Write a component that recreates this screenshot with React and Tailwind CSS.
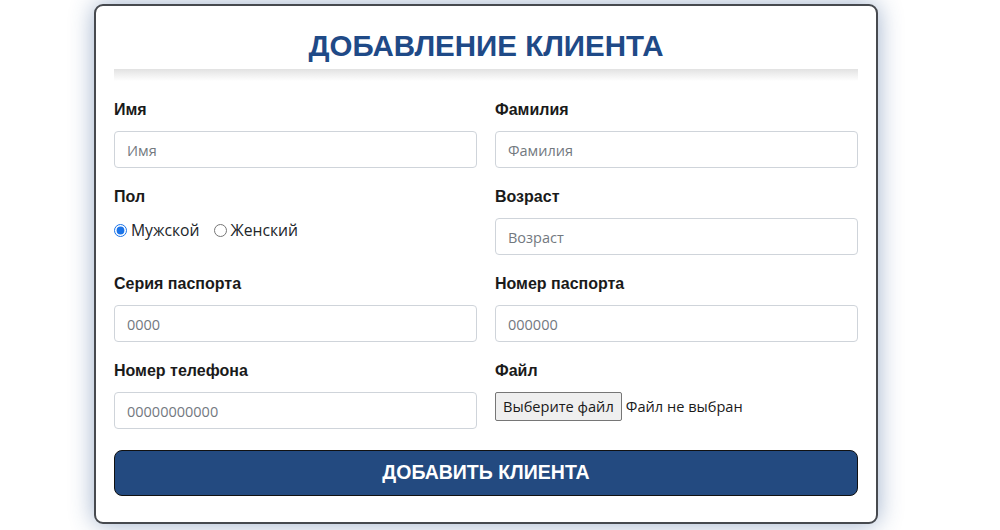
import React from "react";

const labelCls = "block h-[19px] leading-[19px] text-[16px] font-bold text-[#1a1a1a] mb-[12px] [font-family:'Liberation_Sans',Arial,sans-serif]";
const inputCls = "block w-full h-[37px] rounded-[4px] border border-[#cfd4da] bg-white px-[12px] pt-[1px] text-[14.5px] text-[#212529] placeholder:text-[#73797f] outline-none [font-family:'Open_Sans','Noto_Sans',sans-serif]";

function Field({ label, placeholder }) {
  return (
    <div>
      <label className={labelCls}>{label}</label>
      <input className={inputCls} placeholder={placeholder} />
    </div>
  );
}

export default function App() {
  return (
    <div className="w-[1000px] h-[530px] bg-white flex justify-start pl-[94px] pt-[4px] overflow-hidden">
      <div className="w-[784px] h-[520px] shrink-0 border-2 border-[#474a4f] rounded-[9px] bg-white shadow-[0_0_24px_rgba(40,80,140,0.45)] px-[18px] pb-[25px]">
        <h2 className="text-center text-[29.5px] leading-[32px] font-bold text-[#1f4a87] pt-[24px] pb-[7px] [font-family:'Liberation_Sans',Arial,sans-serif]">
          ДОБАВЛЕНИЕ КЛИЕНТА
        </h2>
        <div className="h-[12px] bg-gradient-to-b from-[#e2e2e2] to-white" />
        <div className="grid grid-cols-2 gap-x-[18px] gap-y-[19px] mt-[19px]">
          <Field label="Имя" placeholder="Имя" />
          <Field label="Фамилия" placeholder="Фамилия" />
          <div>
            <label className={labelCls}>Пол</label>
            <div className="flex items-center h-[25px] text-[15.7px] text-[#212529] [font-family:'Open_Sans','Noto_Sans',sans-serif]">
              <label className="flex items-center">
                <input type="radio" name="g" defaultChecked className="w-[13px] h-[13px] m-0 mr-[4px] accent-[#1a73e8]" />
                Мужской
              </label>
              <label className="flex items-center ml-[14px]">
                <input type="radio" name="g" className="w-[13px] h-[13px] m-0 mr-[4px]" />
                Женский
              </label>
            </div>
          </div>
          <Field label="Возраст" placeholder="Возраст" />
          <Field label="Серия паспорта" placeholder="0000" />
          <Field label="Номер паспорта" placeholder="000000" />
          <Field label="Номер телефона" placeholder="00000000000" />
          <div>
            <label className={labelCls}>Файл</label>
            <div className="flex items-center mt-[2px] text-[14.6px] text-[#1a1a1a] [font-family:'Open_Sans','Noto_Sans',sans-serif]">
              <span className="h-[29px] px-[7px] flex items-center border border-[#767676] rounded-[2px] bg-[#efefef]">
                Выберите файл
              </span>
              <span className="ml-[4px]">Файл не выбран</span>
            </div>
          </div>
        </div>
        <button className="mt-[21px] w-full h-[46px] rounded-[8px] border border-[#111] bg-[#234a80] text-white text-[19.5px] font-bold [font-family:'Liberation_Sans',Arial,sans-serif]">
          ДОБАВИТЬ КЛИЕНТА
        </button>
      </div>
    </div>
  );
}
